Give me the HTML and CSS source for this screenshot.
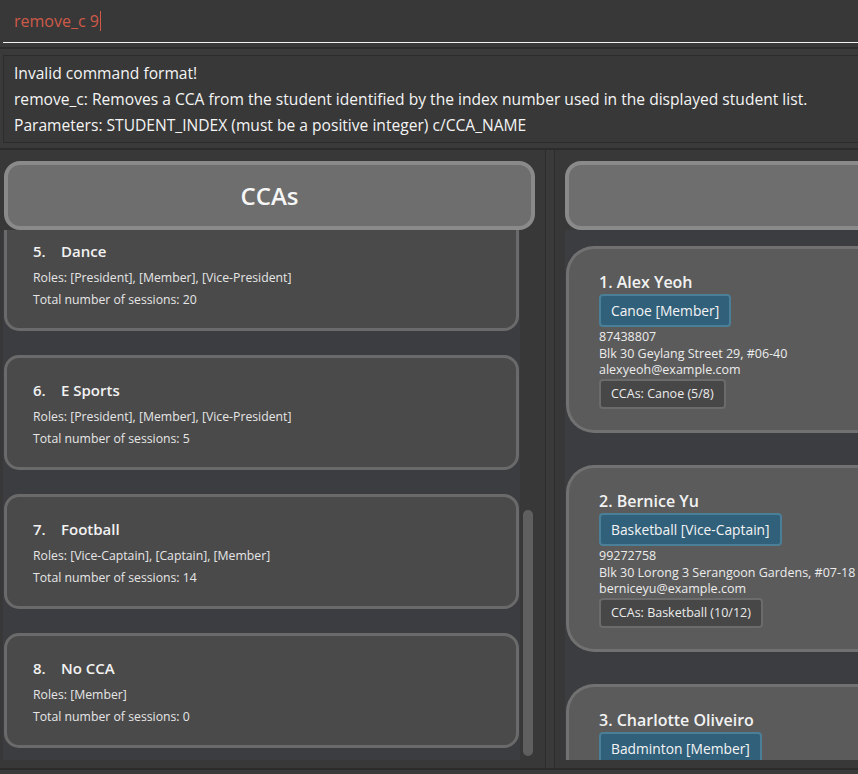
FILE: index.html
```html
<!DOCTYPE html>
<html>
<head>
<meta charset="utf-8">
<link rel="stylesheet" href="styles.css">
</head>
<body>
<div class="app">
  <div class="command">
    <div class="cmd-field"><span class="cmd-text">remove_c 9</span><span class="caret"></span></div>
  </div>
  <div class="result">
    <p>Invalid command format!</p>
    <p>remove_c: Removes a CCA from the student identified by the index number used in the displayed student list.</p>
    <p>Parameters: STUDENT_INDEX (must be a positive integer) c/CCA_NAME</p>
  </div>
  <div class="panels">
    <section class="panel panel-left">
      <div class="panel-header">CCAs</div>
      <div class="list-wrap">
        <div class="cca-list">
          <div class="cca-card first">
            <div class="cca-title"><span class="num">5.</span>Dance</div>
            <div class="cca-line">Roles: [President], [Member], [Vice-President]</div>
            <div class="cca-line">Total number of sessions: 20</div>
          </div>
          <div class="cca-card">
            <div class="cca-title"><span class="num">6.</span>E Sports</div>
            <div class="cca-line">Roles: [President], [Member], [Vice-President]</div>
            <div class="cca-line">Total number of sessions: 5</div>
          </div>
          <div class="cca-card">
            <div class="cca-title"><span class="num">7.</span>Football</div>
            <div class="cca-line">Roles: [Vice-Captain], [Captain], [Member]</div>
            <div class="cca-line">Total number of sessions: 14</div>
          </div>
          <div class="cca-card">
            <div class="cca-title"><span class="num">8.</span>No CCA</div>
            <div class="cca-line">Roles: [Member]</div>
            <div class="cca-line">Total number of sessions: 0</div>
          </div>
        </div>
        <div class="scrollbar"><div class="thumb"></div></div>
      </div>
    </section>
    <div class="divider"></div>
    <section class="panel panel-right">
      <div class="panel-header"></div>
      <div class="student-list">
        <div class="student-card">
          <div class="student-name">1. Alex Yeoh</div>
          <div class="tags"><span class="tag">Canoe [Member]</span></div>
          <div class="info">87438807</div>
          <div class="info">Blk 30 Geylang Street 29, #06-40</div>
          <div class="info">alexyeoh@example.com</div>
          <div class="ccas"><span class="cca-box">CCAs: Canoe (5/8)</span></div>
        </div>
        <div class="student-card">
          <div class="student-name">2. Bernice Yu</div>
          <div class="tags"><span class="tag">Basketball [Vice-Captain]</span></div>
          <div class="info">99272758</div>
          <div class="info">Blk 30 Lorong 3 Serangoon Gardens, #07-18</div>
          <div class="info">berniceyu@example.com</div>
          <div class="ccas"><span class="cca-box">CCAs: Basketball (10/12)</span></div>
        </div>
        <div class="student-card">
          <div class="student-name">3. Charlotte Oliveiro</div>
          <div class="tags"><span class="tag">Badminton [Member]</span></div>
          <div class="info">93210283</div>
          <div class="info">Blk 11 Ang Mo Kio Street 74, #11-04</div>
          <div class="info">charlotte@example.com</div>
          <div class="ccas"><span class="cca-box">CCAs: Badminton (3/6)</span></div>
        </div>
      </div>
    </section>
  </div>
</div>
</body>
</html>
```

FILE: styles.css
```css
* { box-sizing: border-box; }
html, body {
  margin: 0;
  padding: 0;
  width: 858px;
  height: 774px;
  overflow: hidden;
  background: #3a3a3a;
  font-family: "Open Sans", "Noto Sans", sans-serif;
  color: #ffffff;
}
.app {
  display: flex;
  flex-direction: column;
  width: 858px;
  height: 774px;
}
.command {
  height: 49px;
  background: #383838;
  border-bottom: 2px solid #2c2c2c;
  padding-left: 3px;
  flex: none;
}
.cmd-field {
  height: 43px;
  border-bottom: 1px solid #f2f2f2;
  padding-left: 11px;
  display: flex;
  align-items: center;
}
.cmd-text {
  color: #cf5a48;
  font-size: 16px;
}
.caret {
  display: inline-block;
  width: 1px;
  height: 20px;
  background: #cf5a48;
  margin-left: 1px;
}
.result {
  flex: none;
  margin: 6px 0 0 3px;
  height: 88px;
  border: 1px solid #2c2c2c;
  border-right: none;
  background: #383838;
  padding: 4px 0 0 10px;
}
.result p {
  margin: 0;
  font-size: 15.6px;
  line-height: 26px;
  color: #f4f4f4;
  white-space: nowrap;
}
.panels {
  flex: none;
  margin-top: 5px;
  border-top: 2px solid #2c2c2c;
  height: 622px;
  display: flex;
  border-bottom: 2px solid #2c2c2c;
  background: #383838;
}
.panel {
  height: 100%;
  display: flex;
  flex-direction: column;
  padding-top: 11px;
}
.panel-left {
  width: 545px;
  flex: none;
  padding-left: 3px;
}
.divider {
  width: 10px;
  flex: none;
  border-left: 1px solid #2c2c2c;
  border-right: 1px solid #2c2c2c;
  background: #3a3a3a;
}
.panel-right {
  flex: none;
  width: 600px;
  padding-left: 10px;
}
.panel-header {
  flex: none;
  height: 69px;
  background: #6e6e6e;
  border: 4px solid #8a8a8a;
  border-radius: 16px;
  display: flex;
  align-items: center;
  justify-content: center;
  font-size: 24px;
  font-weight: 600;
  color: #f6f6f6;
  position: relative;
  z-index: 1;
}
.panel-left .panel-header {
  width: 531px;
  margin-left: 1px;
}
.list-wrap {
  height: 530px;
  display: flex;
  flex: none;
}
.cca-list {
  width: 517px;
  height: 530px;
  overflow: hidden;
  background: #3c3d40;
  padding-left: 1px;
}
.cca-card {
  width: 515px;
  height: 115px;
  margin-bottom: 24px;
  background: #4a4a4a;
  border: 3px solid #6a6a6a;
  border-radius: 15px;
  padding: 22px 0 0 26px;
}
.cca-card.first {
  margin-top: -14px;
}
.cca-title {
  font-size: 15px;
  font-weight: 600;
  line-height: 20px;
  margin-bottom: 6px;
  color: #f2f2f2;
  display: flex;
}
.num {
  width: 28px;
  flex: none;
}
.cca-line {
  font-size: 12.25px;
  line-height: 22px;
  color: #e6e6e6;
}
.scrollbar {
  width: 20px;
  flex: none;
  padding: 280px 0 4px 3px;
}
.thumb {
  width: 10px;
  height: 246px;
  border-radius: 5px;
  background: #5f5f5f;
}
.student-list {
  height: 530px;
  overflow: hidden;
  background: #3c3d40;
  padding: 16px 0 0 1px;
}
.student-card {
  height: 187px;
  margin-bottom: 32px;
  background: #5b5b5b;
  border: 3px solid #717171;
  border-right: none;
  border-radius: 28px 0 0 28px;
  padding: 22px 0 0 30px;
}
.student-name {
  font-size: 16px;
  font-weight: 600;
  line-height: 22px;
  color: #f2f2f2;
}
.tags {
  display: flex;
  margin-top: 1px;
  margin-bottom: 2px;
}
.tag {
  height: 33px;
  display: flex;
  align-items: center;
  padding: 0 10px;
  background: #31607a;
  border: 2px solid #4b7f98;
  border-radius: 4px;
  font-size: 13.8px;
  color: #f4f4f4;
}
.info {
  font-size: 12.5px;
  line-height: 16.5px;
  color: #ececec;
  white-space: nowrap;
}
.ccas {
  display: flex;
  margin-top: 0;
}
.cca-box {
  height: 30px;
  display: flex;
  align-items: center;
  padding: 0 10px;
  background: #474747;
  border: 2px solid #6b6b6b;
  border-radius: 4px;
  font-size: 12.5px;
  color: #ececec;
}
```
